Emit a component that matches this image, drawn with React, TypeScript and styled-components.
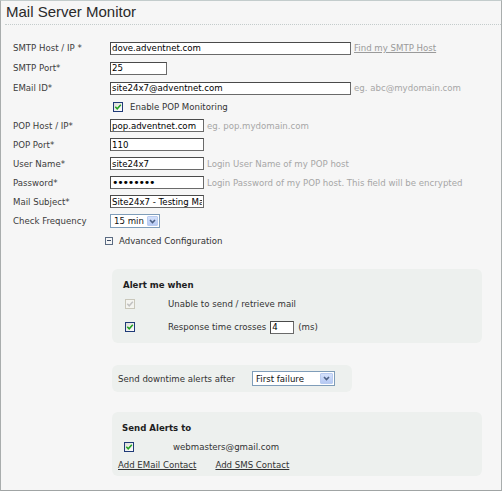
import React from "react";
import styled, { createGlobalStyle } from "styled-components";

const Global = createGlobalStyle`
  html, body { margin: 0; padding: 0; background: #f6f6f6; }
  body {
    font-family: "DejaVu Sans", Verdana, sans-serif;
    font-size: 8.6px;
    color: #3a3a3a;
  }
`;

const Frame = styled.div`
  width: 502px;
  height: 491px;
  box-sizing: border-box;
  border: 1px solid;
  border-color: #c3cccc #a9adad #a0a4a4 #a9adad;
  background: #f6f6f6;
  display: flex;
  flex-direction: column;
`;

const Header = styled.h1`
  margin: 0 0 0 4px;
  height: 23px;
  padding-left: 1px;
  border-bottom: 1px dotted #c4cccc;
  font-family: "Liberation Sans", Arial, sans-serif;
  font-weight: normal;
  font-size: 15px;
  line-height: 21px;
  color: #2a2a2a;
`;

const Form = styled.div`
  padding: 13px 0 0 12px;
  display: flex;
  flex-direction: column;
`;

const Row = styled.div<{ $h?: number; $indent?: number }>`
  display: flex;
  align-items: center;
  height: ${(p) => p.$h ?? 19}px;
  padding-left: ${(p) => p.$indent ?? 0}px;
  white-space: nowrap;
`;

const Label = styled.label`
  width: 97px;
  flex: none;
  color: #3c3c3c;
`;

const TextInput = styled.input<{ $w: number }>`
  width: ${(p) => p.$w}px;
  height: 13px;
  box-sizing: border-box;
  margin: 0;
  padding: 0 1px;
  border: 1px solid #4a4a4a;
  border-right-color: #6a6a6a;
  border-bottom-color: #6a6a6a;
  background: #fff;
  font-family: "DejaVu Sans", Verdana, sans-serif;
  font-size: 8.6px;
  color: #000;
  outline: none;
  flex: none;
`;

const PasswordInput = styled(TextInput)`
  font-size: 11px;
  letter-spacing: -1.2px;
`;

const Hint = styled.span`
  margin-left: 3px;
  color: #a6a6a6;
`;

const HintLink = styled.a`
  margin-left: 3px;
  color: #9a9a9a;
  text-decoration: underline;
`;

const CheckBox = styled.span<{ $disabled?: boolean }>`
  display: inline-flex;
  align-items: center;
  justify-content: center;
  width: 10px;
  height: 10px;
  box-sizing: border-box;
  flex: none;
  border: 1px solid ${(p) => (p.$disabled ? "#c9c7ba" : "#1f3a78")};
  background: ${(p) =>
    p.$disabled ? "#f4f4f0" : "linear-gradient(135deg, #dcdcd7, #ffffff)"};
`;

const Check = ({ disabled }: { disabled?: boolean }) => (
  <CheckBox $disabled={disabled}>
    <svg width="8" height="8" viewBox="0 0 8 8">
      <path
        d="M1.3 3.8 L3.2 5.8 L6.8 1.8"
        fill="none"
        stroke={disabled ? "#c2c2c2" : "#21a121"}
        strokeWidth="1.5"
      />
    </svg>
  </CheckBox>
);

const CheckText = styled.span<{ $gap: number }>`
  margin-left: ${(p) => p.$gap}px;
  color: #333;
`;

const Collapse = styled.span`
  width: 8px;
  height: 8px;
  box-sizing: border-box;
  border: 1px solid #5b6b82;
  display: inline-flex;
  align-items: center;
  justify-content: center;
  flex: none;
  &::after {
    content: "";
    width: 4px;
    height: 1px;
    background: #3d4d66;
  }
`;

const SelectBox = styled.div<{ $w: number; $h: number }>`
  display: inline-flex;
  align-items: center;
  justify-content: space-between;
  width: ${(p) => p.$w}px;
  height: ${(p) => p.$h}px;
  box-sizing: border-box;
  border: 1px solid #7f9db9;
  background: #fff;
  padding: 0 1px 0 3px;
  color: #111;
  flex: none;
`;

const ArrowBtn = styled.span<{ $w: number }>`
  width: ${(p) => p.$w}px;
  height: calc(100% - 2px);
  box-sizing: border-box;
  border: 1px solid #b9cbf0;
  border-radius: 1px;
  background: linear-gradient(#d4e1fb, #b6c9f3);
  display: inline-flex;
  align-items: center;
  justify-content: center;
`;

const Select = ({ value, w, h, bw }: { value: string; w: number; h: number; bw: number }) => (
  <SelectBox $w={w} $h={h}>
    <span>{value}</span>
    <ArrowBtn $w={bw}>
      <svg width="7" height="5" viewBox="0 0 7 5">
        <path d="M1 1 L3.5 3.5 L6 1" fill="none" stroke="#4d6185" strokeWidth="1.6" />
      </svg>
    </ArrowBtn>
  </SelectBox>
);

const Panel = styled.section<{ $w: number; $h: number; $top: number }>`
  margin: ${(p) => p.$top}px 0 0 111px;
  width: ${(p) => p.$w}px;
  height: ${(p) => p.$h}px;
  box-sizing: border-box;
  border-radius: 6px;
  background: #edf0ee;
`;

const PanelBody = styled.div<{ $pt: number }>`
  padding-top: ${(p) => p.$pt}px;
  display: flex;
  flex-direction: column;
`;

const PanelTitle = styled.div<{ $indent: number }>`
  font-weight: bold;
  color: #1e1e1e;
  line-height: 14px;
  padding-left: ${(p) => p.$indent}px;
`;

const SmallInput = styled(TextInput)`
  margin: 0 4px;
`;

const InlinePanel = styled(Panel)`
  display: flex;
  align-items: center;
  padding-left: 6px;
`;

const DowntimeLabel = styled.span`
  width: 134px;
  color: #333;
`;

const Link = styled.a`
  color: #333;
  text-decoration: underline;
  margin-right: 19px;
`;

export default function App() {
  return (
    <>
      <Global />
      <Frame>
        <Header>Mail Server Monitor</Header>
        <Form>
          <Row $h={20}>
            <Label>SMTP Host / IP *</Label>
            <TextInput $w={241} defaultValue="dove.adventnet.com" />
            <HintLink>Find my SMTP Host</HintLink>
          </Row>
          <Row $h={20}>
            <Label>SMTP Port*</Label>
            <TextInput $w={57} defaultValue="25" />
          </Row>
          <Row $h={20}>
            <Label>EMail ID*</Label>
            <TextInput $w={241} defaultValue="site24x7@adventnet.com" />
            <Hint>eg. abc@mydomain.com</Hint>
          </Row>
          <Row $h={18} $indent={100}>
            <Check />
            <CheckText $gap={7}>Enable POP Monitoring</CheckText>
          </Row>
          <Row>
            <Label>POP Host / IP*</Label>
            <TextInput $w={94} defaultValue="pop.adventnet.com" />
            <Hint>eg. pop.mydomain.com</Hint>
          </Row>
          <Row>
            <Label>POP Port*</Label>
            <TextInput $w={94} defaultValue="110" />
          </Row>
          <Row>
            <Label>User Name*</Label>
            <TextInput $w={94} defaultValue="site24x7" />
            <Hint>Login User Name of my POP host</Hint>
          </Row>
          <Row>
            <Label>Password*</Label>
            <PasswordInput $w={94} type="password" defaultValue="site24x7" />
            <Hint>Login Password of my POP host. This field will be encrypted</Hint>
          </Row>
          <Row>
            <Label>Mail Subject*</Label>
            <TextInput $w={94} defaultValue="Site24x7 - Testing Mail Server" />
          </Row>
          <Row $h={20}>
            <Label>Check Frequency</Label>
            <Select value="15 min" w={50} h={14} bw={11} />
          </Row>
          <Row $indent={92}>
            <Collapse />
            <CheckText $gap={6}>Advanced Configuration</CheckText>
          </Row>
        </Form>

        <Panel $w={370} $h={74} $top={19}>
          <PanelBody $pt={9}>
            <PanelTitle $indent={11}>Alert me when</PanelTitle>
            <Row $h={20} $indent={13} style={{ marginTop: 2 }}>
              <Check disabled />
              <CheckText $gap={33}>Unable to send / retrieve mail</CheckText>
            </Row>
            <Row $h={20} $indent={13} style={{ marginTop: 3 }}>
              <Check />
              <CheckText $gap={33}>Response time crosses</CheckText>
              <SmallInput $w={24} defaultValue="4" />
              <CheckText $gap={0}>(ms)</CheckText>
            </Row>
          </PanelBody>
        </Panel>

        <InlinePanel $w={240} $h={27} $top={22}>
          <DowntimeLabel>Send downtime alerts after</DowntimeLabel>
          <Select value="First failure" w={83} h={15} bw={13} />
        </InlinePanel>

        <Panel $w={370} $h={64} $top={20}>
          <PanelBody $pt={9}>
            <PanelTitle $indent={10}>Send Alerts to</PanelTitle>
            <Row $h={20} $indent={12} style={{ marginTop: 2 }}>
              <Check />
              <CheckText $gap={39}>webmasters@gmail.com</CheckText>
            </Row>
            <Row $h={16} $indent={6}>
              <Link>Add EMail Contact</Link>
              <Link>Add SMS Contact</Link>
            </Row>
          </PanelBody>
        </Panel>
      </Frame>
    </>
  );
}
